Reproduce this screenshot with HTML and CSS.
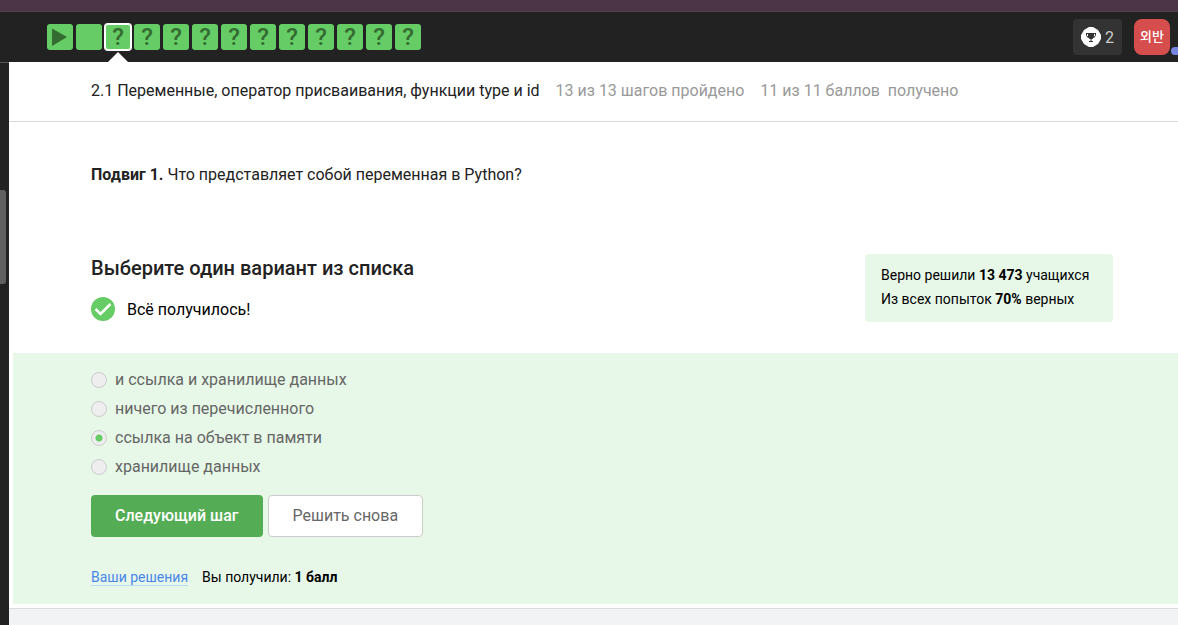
FILE: index.html
```html
<!DOCTYPE html>
<html lang="ru">
<head>
<meta charset="utf-8">
<meta name="viewport" content="width=device-width, initial-scale=1">
<title>2.1 Переменные</title>
<link rel="stylesheet" href="styles.css">
</head>
<body>
<div class="strip"></div>
<header class="topbar">
  <nav class="steps" aria-label="Шаги">
    <a class="step" href="#s1" aria-label="Видео"><svg class="step-play" viewBox="0 0 26 26"><path d="M5 4.500 20 13 5 22Z" fill="#336b30"/></svg></a>
    <a class="step" href="#s2" aria-label="Текст"></a>
    <a class="step step-current" href="#s3">?</a>
    <a class="step" href="#s4">?</a>
    <a class="step" href="#s5">?</a>
    <a class="step" href="#s6">?</a>
    <a class="step" href="#s7">?</a>
    <a class="step" href="#s8">?</a>
    <a class="step" href="#s9">?</a>
    <a class="step" href="#s10">?</a>
    <a class="step" href="#s11">?</a>
    <a class="step" href="#s12">?</a>
    <a class="step" href="#s13">?</a>
  </nav>
  <div class="account">
    <button class="awards" type="button">
      <svg class="awards-icon" viewBox="0 0 20 20"><path d="M8 0h4l5 3 3 5v4l-3 5-5 3H8l-5-3-3-5V8l3-5Z" fill="#fff"/><path d="M7 6h6v4l-1.500 2h-3L7 10Z" fill="#333"/><path d="M5 6.500h10M5.500 6.500v2L7.500 11M14.500 6.500v2L12.500 11M8 14.500h4" fill="none" stroke="#333"/><path d="M9.500 12h1v2h-1Z" fill="#333"/></svg>
      <span>2</span>
    </button>
    <button class="avatar" type="button">외반<span class="avatar-dot"></span></button>
  </div>
</header>
<div class="shell">
  <aside class="rail"><div class="rail-thumb"></div></aside>
  <main class="lesson">
    <div class="lesson-head">
      <span class="lesson-title">2.1 Переменные, оператор присваивания, функции type и id</span>
      <span>13 из 13 шагов пройдено</span>
      <span>11 из 11 баллов&nbsp; получено</span>
    </div>
    <p class="question"><b>Подвиг 1.</b> Что представляет собой переменная в Python?</p>
    <section class="summary">
      <div>
        <h2 class="summary-title">Выберите один вариант из списка</h2>
        <p class="result"><svg class="result-icon" viewBox="0 0 24 24"><circle cx="12" cy="12" r="12" fill="#66cc66"/><path d="M4.500 12 9.500 17 19.500 7" fill="none" stroke="#fff" stroke-width="2.500"/></svg>Всё получилось!</p>
      </div>
      <div class="stats">
        <div>Верно решили <b>13 473</b> учащихся</div>
        <div>Из всех попыток <b>70%</b> верных</div>
      </div>
    </section>
    <form class="answers">
      <label class="option"><input type="radio" name="answer" disabled>и ссылка и хранилище данных</label>
      <label class="option"><input type="radio" name="answer" disabled>ничего из перечисленного</label>
      <label class="option"><input type="radio" name="answer" checked disabled>ссылка на объект в памяти</label>
      <label class="option"><input type="radio" name="answer" disabled>хранилище данных</label>
      <div class="actions">
        <button class="btn btn-primary" type="button">Следующий шаг</button>
        <button class="btn" type="button">Решить снова</button>
      </div>
      <div class="score">
        <a class="solutions" href="#solutions">Ваши решения</a>
        <span>Вы получили: <b>1 балл</b></span>
      </div>
    </form>
    <footer class="lesson-foot"></footer>
  </main>
</div>
</body>
</html>
```
FILE: styles.css
```css
* {
  box-sizing: border-box;
}

body {
  margin: 0;
  min-height: 100vh;
  display: flex;
  flex-direction: column;
  background: #222;
  color: #222;
  font: 16px/24px Roboto, "Noto Sans CJK KR", sans-serif;
}

.strip {
  height: 12px;
  background: #4b3547;
  border-bottom: 1px solid #50434f;
}

.topbar {
  height: 50px;
  display: flex;
  align-items: center;
  justify-content: space-between;
  padding: 0 8px 0 47px;
  background: #222;
}

.steps {
  display: flex;
  gap: 3px;
}

.step {
  position: relative;
  width: 26px;
  height: 26px;
  border-radius: 3px;
  background: #66cc66;
  color: #336b30;
  font-size: 24px;
  font-weight: 500;
  line-height: 27px;
  text-align: center;
  text-decoration: none;
}

.step-play {
  display: block;
}

.step-current {
  box-shadow: 0 0 0 1px #fff, inset 0 0 0 1px #fff;
}

.step-current::after {
  content: "";
  position: absolute;
  top: 28px;
  left: 3px;
  border: 10px solid transparent;
  border-top: 0;
  border-bottom-color: #fff;
}

.account {
  display: flex;
  gap: 12px;
}

.awards,
.avatar {
  height: 36px;
  border: 0;
  font-family: inherit;
}

.awards {
  display: flex;
  align-items: center;
  gap: 4px;
  padding: 0 8px;
  border-radius: 4px;
  background: #333;
  color: #ccc;
  font-size: 16px;
}

.awards-icon {
  width: 20px;
  height: 20px;
}

.avatar {
  position: relative;
  width: 36px;
  padding: 0 0 4px;
  border-radius: 8px;
  background: #d64d4d;
  color: #fff;
  font-size: 13px;
  font-weight: 500;
}

.avatar-dot {
  position: absolute;
  right: -8px;
  bottom: 0;
  width: 7px;
  height: 8px;
  border-radius: 4px 0 0 4px;
  background: #7584e0;
}

.shell {
  flex: 1;
  display: flex;
}

.rail {
  width: 9px;
  padding-top: 127px;
  border-top: 1px solid #555;
}

.rail-thumb {
  width: 6px;
  height: 94px;
  border-radius: 0 3px 3px 0;
  background: #606060;
}

.lesson {
  flex: 1;
  display: flex;
  flex-direction: column;
  background: #fff;
}

.lesson-head {
  display: flex;
  gap: 16px;
  padding: 17px 82px 18px;
  border-bottom: 1px solid #dadada;
  color: #999;
}

.lesson-title {
  color: #222;
}

.question {
  margin: 0;
  padding: 41px 82px 67px;
}

.summary {
  display: flex;
  align-items: flex-start;
  justify-content: space-between;
  padding: 0 65px 30px 82px;
}

.summary-title {
  margin: 0;
  font-size: 20px;
  font-weight: 500;
  line-height: 28px;
}

.result {
  display: flex;
  gap: 12px;
  margin: 15px 0 0;
  color: #000;
  line-height: 26px;
}

.result-icon {
  width: 24px;
  height: 24px;
}

.stats {
  min-width: 248px;
  padding: 9px 16px 11px;
  border-radius: 4px;
  background: #e7f8e8;
  color: #000;
  font-size: 14px;
}

.answers {
  display: flex;
  flex-direction: column;
  gap: 5px;
  margin-left: 4px;
  padding: 15px 78px;
  background: #e7f8e8;
}

.option {
  display: flex;
  align-items: center;
  gap: 8px;
  color: #666;
}

.option input {
  appearance: none;
  width: 16px;
  height: 16px;
  margin: 0;
  border: 1px solid #ccc;
  border-radius: 8px;
  background: #eee;
}

.option input:checked {
  background: radial-gradient(circle, #66cc66 3px, #eee 4px);
}

.actions {
  display: flex;
  gap: 5px;
  margin-top: 11px;
}

.btn {
  height: 42px;
  padding: 0 24px;
  border: 1px solid #ccc;
  border-radius: 4px;
  background: #fff;
  color: #666;
  font: inherit;
}

.btn-primary {
  border: 0;
  background: #54ad54;
  color: #fff;
  font-weight: 500;
}

.score {
  display: flex;
  gap: 14px;
  margin-top: 23px;
  color: #000;
  font-size: 14px;
  line-height: 24px;
}

.solutions {
  height: 21px;
  border-bottom: 1px solid #b8dcf5;
  color: #4a86e8;
  text-decoration: none;
}

.lesson-foot {
  flex: 1;
  margin-top: 4px;
  border-top: 1px solid #dadde0;
  background: #f2f3f5;
}
```
